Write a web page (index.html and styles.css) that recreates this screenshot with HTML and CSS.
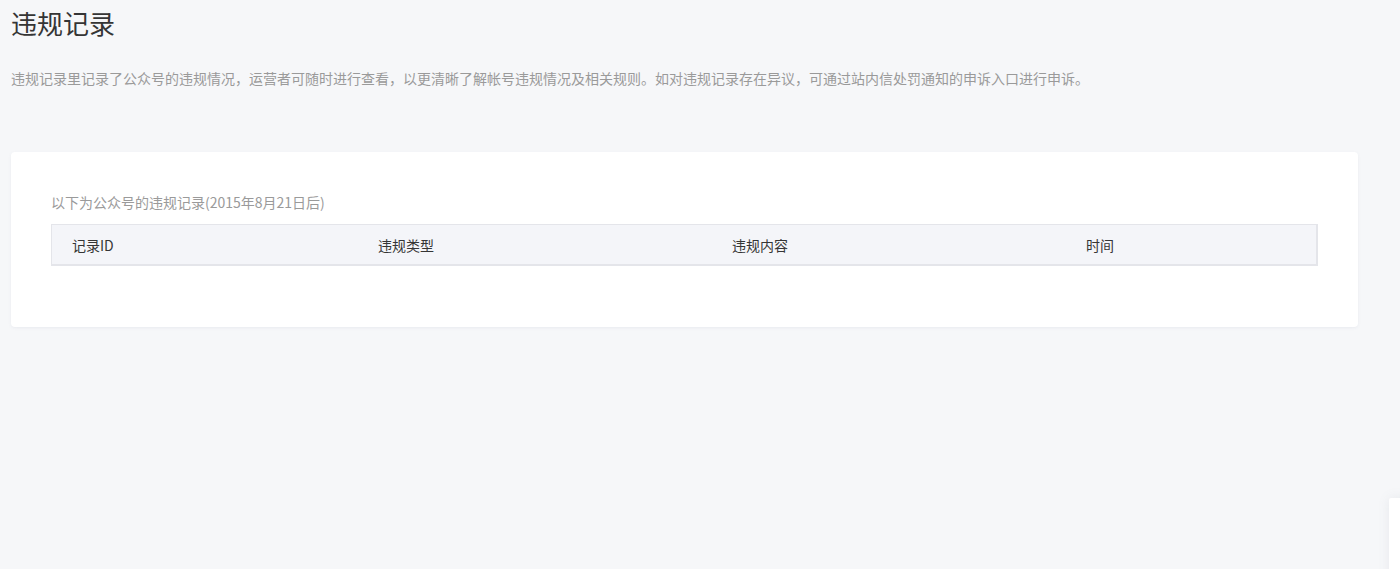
FILE: index.html
```html
<!DOCTYPE html>
<html>
  <head>
    <meta charset="utf-8">
    <link rel="stylesheet" href="styles.css">
  </head>
  <body>
    <div class="page">
      <h2 class="title">违规记录</h2>
      <p class="desc">违规记录里记录了公众号的违规情况，运营者可随时进行查看，以更清晰了解帐号违规情况及相关规则。如对违规记录存在异议，可通过站内信处罚通知的申诉入口进行申诉。</p>

      <div class="card">
        <div class="card-label">以下为公众号的违规记录(2015年8月21日后)</div>
        <table class="table">
          <thead>
            <tr>
              <th class="col-id">记录ID</th>
              <th class="col-type">违规类型</th>
              <th class="col-content">违规内容</th>
              <th class="col-time">时间</th>
            </tr>
          </thead>
          <tbody></tbody>
        </table>
      </div>
    </div>

    <div class="side-panel"></div>
  </body>
</html>
```

FILE: styles.css
```css
html {
  height: 100%;
  background: #f6f7f9;
}

body {
  margin: 0;
  height: 100%;
  font-family: "Noto Sans CJK SC", "Liberation Sans", sans-serif;
  color: #353535;
  overflow: hidden;
}

.page {
  padding: 0 42px 0 11px;
}

.title {
  margin: 6px 0 0;
  font-size: 26px;
  font-weight: normal;
  line-height: 34px;
  color: #353535;
}

.desc {
  margin: 28px 0 0;
  font-size: 14px;
  line-height: 20px;
  color: #9a9a9a;
}

.card {
  margin-top: 64px;
  padding: 40px 40px 61px;
  background: #ffffff;
  border-radius: 4px;
  box-shadow: 0 1px 3px rgba(150, 160, 180, 0.12);
}

.card-label {
  font-size: 14px;
  line-height: 20px;
  color: #9a9a9a;
}

.table {
  width: 100%;
  margin-top: 12px;
  border-collapse: collapse;
  table-layout: fixed;
}

.table th {
  height: 39px;
  padding: 0 0 0 20px;
  background: #f4f5f9;
  border-top: 1px solid #e4e5ea;
  border-bottom: 2px solid #e4e5ea;
  font-size: 14px;
  font-weight: normal;
  text-align: left;
  color: #353535;
}

.table th:first-child {
  border-left: 1px solid #e4e5ea;
}

.table th:last-child {
  border-right: 2px solid #e4e5ea;
}

.col-id {
  width: 286px;
}

.col-type {
  width: 334px;
}

.col-content {
  width: 334px;
}

.side-panel {
  position: fixed;
  left: 1389px;
  top: 498px;
  width: 40px;
  height: 120px;
  background: #ffffff;
  border-radius: 2px;
  box-shadow: 0 0 12px rgba(120, 130, 150, 0.12);
}
```
